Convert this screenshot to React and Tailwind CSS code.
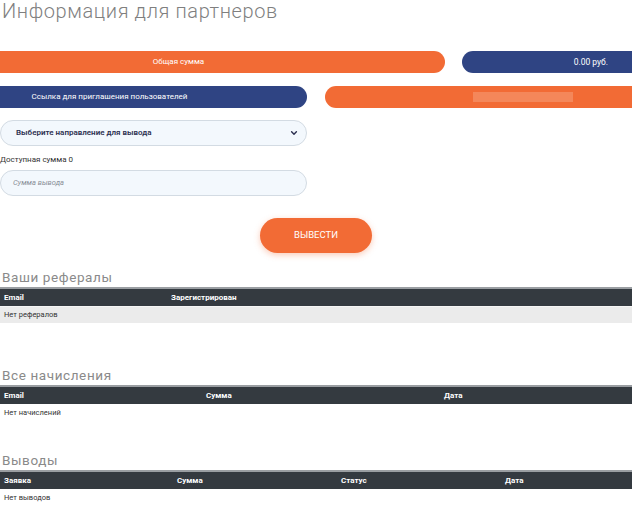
export default function App() {
  return (
    <div className="w-[632px] h-[510px] overflow-hidden bg-white font-['Roboto',sans-serif] text-[#333]">
      <h1 className="text-[20px] leading-[22px] font-light text-[#7f7f7f] tracking-[0.6px] pl-[2px] h-[22px]">
        Информация для партнеров
      </h1>
      <div className="overflow-hidden mt-[29px]">
        <div className="w-[808px] -ml-[88px] flex flex-col gap-[13px]">
          <div className="grid grid-cols-[533px_258px] gap-[17px] h-[22px]">
            <div className="rounded-full bg-[#f26b35] flex items-center justify-center text-white text-[8px]">Общая сумма</div>
            <div className="rounded-full bg-[#2f4483] flex items-center justify-end pr-[112px] text-white text-[8.5px]">0.00 руб.</div>
          </div>
          <div className="grid grid-cols-[395px_395px] gap-[18px] h-[22px]">
            <div className="rounded-full bg-[#2f4483] flex items-center justify-center text-white text-[8px]">Ссылка для приглашения пользователей</div>
            <div className="rounded-full bg-[#f26b35] flex items-center justify-center">
              <div className="w-[100px] h-[10px] bg-[#f4875a]" />
            </div>
          </div>
        </div>
      </div>
      <div className="mt-[12px] w-[307px] h-[26px] rounded-full border border-[#d3dbe3] bg-[#f3f8fd] flex items-center justify-between pl-[15px] pr-[8px]">
        <span className="text-[8px] font-semibold text-[#2c3050]">Выберите направление для вывода</span>
        <svg width="8" height="8" viewBox="0 0 10 10" fill="none">
          <path d="M2 3.5 L5 6.5 L8 3.5" stroke="#2c3050" strokeWidth="1.8" strokeLinecap="round" strokeLinejoin="round" />
        </svg>
      </div>
      <div className="mt-[9px] text-[8px] leading-[10px] text-[#333]">Доступная сумма 0</div>
      <div className="mt-[5px] w-[307px] h-[26px] rounded-full border border-[#d3dbe3] bg-[#f3f8fd] flex items-center pl-[12px]">
        <span className="text-[7.5px] italic text-[#8a8f98]">Сумма вывода</span>
      </div>
      <div className="flex justify-center mt-[22px]">
        <button className="w-[112px] h-[35px] rounded-full bg-[#f26b35] text-white text-[9.5px] font-normal shadow-[0_2px_6px_rgba(242,107,53,0.35)]">
          ВЫВЕСТИ
        </button>
      </div>
      <h2 className="mt-[14px] text-[13.5px] leading-[20px] font-normal text-[#8a8a8a] tracking-[0.6px] pl-[2px]">Ваши рефералы</h2>
      <div>
        <div className="h-[19px] bg-[#343a40] border-t-2 border-[#9a9ea2] flex items-center text-white text-[8px] font-bold">
          <div className="w-[167px] pl-[4px]">Email</div>
          <div className="pl-[4px]">Зарегистрирован</div>
        </div>
        <div className="h-[17px] bg-[#ebebeb] border-t border-[#f5f5f5] flex items-center text-[7.5px] pl-[4px]">Нет рефералов</div>
      </div>
      <h2 className="mt-[42px] text-[13.5px] leading-[20px] font-normal text-[#8a8a8a] tracking-[0.6px] pl-[2px]">Все начисления</h2>
      <div>
        <div className="h-[19px] bg-[#343a40] border-t-2 border-[#9a9ea2] flex items-center text-white text-[8px] font-bold">
          <div className="w-[202px] pl-[4px]">Email</div>
          <div className="w-[238px] pl-[4px]">Сумма</div>
          <div className="pl-[4px]">Дата</div>
        </div>
        <div className="h-[17px] flex items-center text-[7.5px] pl-[4px]">Нет начислений</div>
      </div>
      <h2 className="mt-[29px] text-[13.5px] leading-[20px] font-normal text-[#8a8a8a] tracking-[0.6px] pl-[2px]">Выводы</h2>
      <div>
        <div className="h-[19px] bg-[#343a40] border-t-2 border-[#9a9ea2] flex items-center text-white text-[8px] font-bold">
          <div className="w-[173px] pl-[4px]">Заявка</div>
          <div className="w-[164px] pl-[4px]">Сумма</div>
          <div className="w-[164px] pl-[4px]">Статус</div>
          <div className="pl-[4px]">Дата</div>
        </div>
        <div className="h-[17px] flex items-center text-[7.5px] pl-[4px]">Нет выводов</div>
      </div>
    </div>
  );
}
